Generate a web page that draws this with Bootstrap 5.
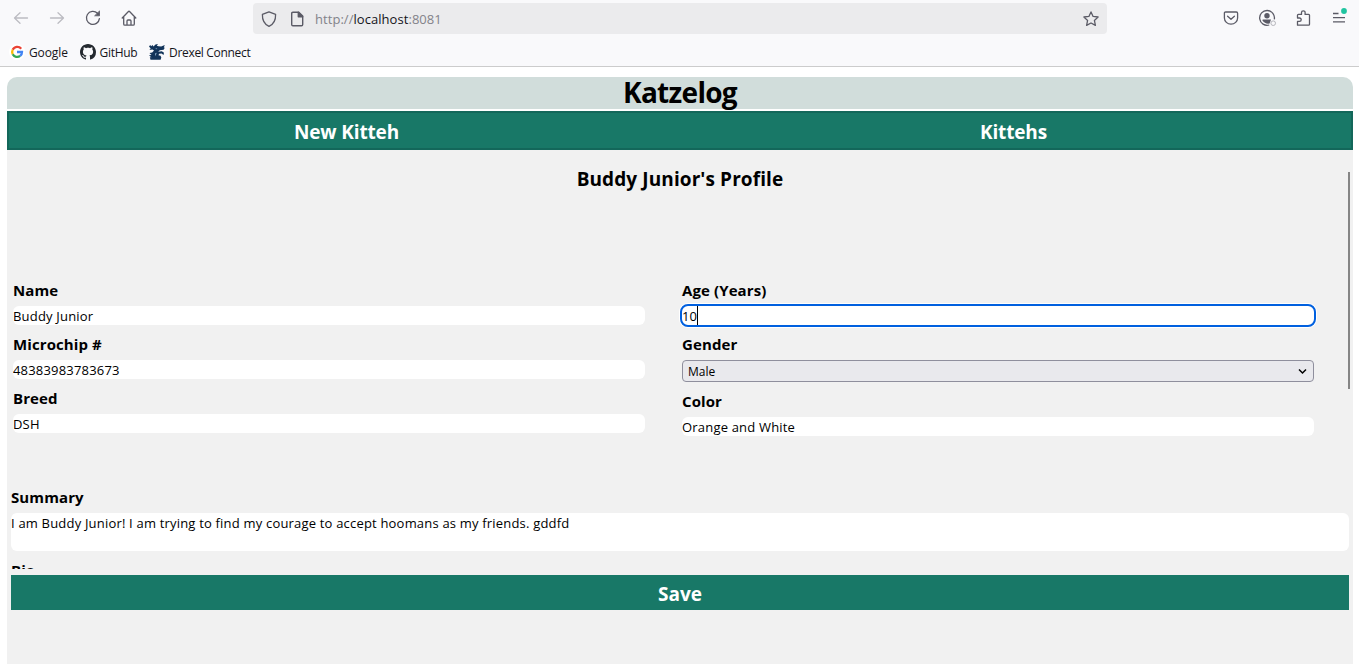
<!DOCTYPE html>
<html lang="en">
<head>
<meta charset="utf-8">
<meta name="viewport" content="width=device-width, initial-scale=1">
<title>Katzelog</title>
<link href="https://cdn.jsdelivr.net/npm/bootstrap@5.3.0/dist/css/bootstrap.min.css" rel="stylesheet">
<style>
  body { font-family: "Open Sans", "Noto Sans", sans-serif; color: #000; background: #fff; overflow: hidden; }
  svg { display: block; flex: none; overflow: visible; }
  .browser { height: 67px; background: #f9f9fb; border-bottom: 1px solid #ccc; color: #5b5b66; }
  .toolbar { height: 36px; }
  .tool-left { width: 253px; padding-left: 13px; gap: 20px; }
  .tool-right { padding-right: 11px; gap: 19px; }
  .urlbar { width: 854px; height: 31px; margin-top: 3px; background: #ebebed; border-radius: 4px; font-size: 13px; padding: 0 8px; color: #83838a; }
  .urlbar b { font-weight: 400; color: #15141a; }
  .page-icon { margin-left: 12px; }
  .url { margin-left: 10px; padding-top: 2px; letter-spacing: .05px; }
  .bookmarks { height: 30px; padding: 2px 0 0 9px; font-size: 12px; color: #15141a; }
  .bm { margin-left: 4px; padding-top: 1px; letter-spacing: -.1px; }
  .bm-google { width: 51px; }
  .bm-github { width: 49px; margin-left: 3.5px; letter-spacing: -.3px; }
  .bm-drexel { margin-left: 4.5px; letter-spacing: -.31px; }
  .app { margin: 10px 6px 0 7px; }
  .brand { height: 32px; background: #d1dddb; border-radius: 10px 10px 0 0; font-size: 28px; font-weight: 700; line-height: 30px; margin-bottom: 2px; letter-spacing: -.7px; }
  .tabs { height: 39px; background: #187867; border: 2px solid #13675a; padding: 3px 4px 0; font-size: 19px; font-weight: 700; letter-spacing: -.15px; }
  .panel { height: 514px; background: #f1f1f1; padding: 0 4px; }
  .profile { height: 419px; overflow: hidden; }
  .profile h1 { font-size: 19px; font-weight: 700; line-height: 26px; margin: 0; padding-top: 16px; height: 129px; letter-spacing: .1px; }
  .fields { padding-left: 2px; gap: 37px; }
  .field-col { width: 632px; }
  .form-label { display: block; font-size: 15px; font-weight: 700; line-height: 22px; height: 22px; margin: 0 0 5px; letter-spacing: .1px; }
  .form-control, .form-control:focus { font-size: 13px; line-height: 18px; min-height: 0; height: 19px; padding: 1px 0 0; border: 0; border-radius: 6px; color: #000; background: #fff; box-shadow: none; letter-spacing: .19px; }
  .entry { margin-bottom: 8px; }
  .form-control.editing { outline: 2px solid #0060df; box-shadow: 0 0 0 3px #fff; letter-spacing: 0; }
  .caret { left: 15px; top: 0; width: 1px; height: 19px; background: #000; }
  .form-select { height: 22px; padding: 0 5px; font-size: 12px; line-height: 19px; color: #000; background-color: #e9e9ed; background-image: none; border: 1px solid #8f8f9d; border-radius: 4px; }
  .chevron { right: 7px; top: 8px; }
  textarea.form-control { height: 38px; min-height: 0; resize: none; overflow: hidden; line-height: 19px; }
  .summary { margin-top: 42px; }
  .bio-label { margin-top: 8px; }
  .save { display: block; width: 100%; height: 35px; margin-top: 6px; padding: 0; border: 0; border-radius: 0; background: #187867; color: #fff; font-size: 19px; font-weight: 700; line-height: 39px; }
  .thumb { right: 3px; top: 22px; width: 2px; height: 217px; background: #858585; }
</style>
</head>
<body>
<header class="browser">
  <div class="toolbar d-flex align-items-start">
    <div class="tool-left d-flex align-items-center h-100">
      <svg width="16" height="16" viewBox="0 0 16 16" fill="none" stroke="#bcbcc2" stroke-width="1.3" stroke-linecap="round" stroke-linejoin="round"><path d="M14.5 8h-13M7 2.7 1.5 8 7 13.3"/></svg>
      <svg width="16" height="16" viewBox="0 0 16 16" fill="none" stroke="#bcbcc2" stroke-width="1.3" stroke-linecap="round" stroke-linejoin="round"><path d="M1.5 8h13M9 2.7 14.5 8 9 13.3"/></svg>
      <svg width="16" height="16" viewBox="0 0 16 16" fill="none" stroke="#5b5b66" stroke-width="1.3" stroke-linecap="round" stroke-linejoin="round"><path d="M14.4 8.6A6.5 6.5 0 1 1 12.5 3.3"/><path d="M14.5 1.3V5.8H10z" fill="#5b5b66" stroke-width=".8"/></svg>
      <svg width="16" height="16" viewBox="0 0 16 16" fill="none" stroke="#5b5b66" stroke-width="1.3" stroke-linecap="round" stroke-linejoin="round"><path d="M1.2 8 7.2 1.7q.8-.8 1.6 0L14.8 8M2.7 7v7q0 1.2 1.2 1.2h8.2q1.2 0 1.2-1.2V7M6 15v-4q0-1 1-1h2q1 0 1 1v4"/></svg>
    </div>
    <div class="urlbar d-flex align-items-center">
      <svg width="16" height="16" viewBox="0 0 16 16" fill="none" stroke="#5b5b66" stroke-width="1.3" stroke-linejoin="round"><path d="M8 .8 14.6 3.4C14.8 9 12.5 13.2 8 15.3 3.5 13.2 1.2 9 1.4 3.4z"/></svg>
      <svg class="page-icon" width="16" height="16" viewBox="0 0 16 16" fill="none" stroke="#5b5b66" stroke-width="1.4" stroke-linejoin="round"><path d="M3.9 1.2h5.9l3.9 3.9v8.4q0 1.2-1.2 1.2H3.9q-1.2 0-1.2-1.2V2.4q0-1.2 1.2-1.2z"/><path d="M9.3 1.2v4.5h4.4z" fill="#5b5b66"/></svg>
      <span class="url">http://<b>localhost</b>:8081</span>
      <svg class="ms-auto" width="16" height="16" viewBox="0 0 16 16" fill="none" stroke="#5b5b66" stroke-width="1.3" stroke-linejoin="round"><path d="m8 .9 2.1 4.5 5 .6-3.7 3.4 1 5L8 12l-4.4 2.4 1-5L.9 6l5-.6z"/></svg>
    </div>
    <div class="tool-right ms-auto d-flex align-items-center h-100">
      <svg width="16" height="16" viewBox="0 0 16 16" fill="none" stroke="#5b5b66" stroke-width="1.3" stroke-linecap="round" stroke-linejoin="round"><path d="M2.7 2h10.6q1.3 0 1.3 1.3V8a6.6 6.2 0 0 1-13.2 0V3.300Q1.400 2 2.700 2zM4.600 6.200 8 9.300l3.400-3.100"/></svg>
      <svg width="18" height="18" viewBox="0 0 18 18" fill="none"><path d="M11.200 16A7.400 7.400 0 1 1 16.300 10.400" stroke="#5b5b66" stroke-width="1.3"/><circle cx="9" cy="6.700" r="2.700" fill="#5b5b66"/><path d="M4.300 11.300q0-.9.900-.9h7.800l-1.400 4.200Q7.200 15.500 4.300 11.300z" fill="#5b5b66"/><circle cx="15.200" cy="14.200" r="2.300" stroke="#b5b5bb"/></svg>
      <svg width="16" height="16" viewBox="0 0 16 16" fill="none" stroke="#5b5b66" stroke-width="1.3" stroke-linejoin="round"><path d="M2.500 15.200V11.400h2a1.700 1.700 0 0 0 0-3.400h-2V5.300q0-.9.900-.9h3.100V2.600a1.800 1.800 0 0 1 3.600 0v1.800h3.500q.9 0 .9.900v9q0 .9-.9.900z"/></svg>
      <svg width="18" height="18" viewBox="0 0 18 18" fill="none"><path d="M3 4.500h5.500M3 8.700h12M3 12.900h12" stroke="#5b5b66" stroke-width="1.3"/><circle cx="14" cy="2" r="2.900" fill="#20c4a0"/></svg>
    </div>
  </div>
  <nav class="bookmarks d-flex align-items-center">
    <svg width="16" height="16" viewBox="0 0 16 16" fill="none" stroke-width="2.300"><circle cx="8" cy="8" r="8" fill="#fff"/><path d="M12.200 4.700A5 5 0 0 0 3.700 5.800" stroke="#ea4335"/><path d="M3.700 5.700a5 5 0 0 0 0 4.600" stroke="#fbbc05"/><path d="M3.700 10.200a5 5 0 0 0 7.500 1.600" stroke="#34a853"/><path d="M8 8h5a5 5 0 0 1-1.800 3.900" stroke="#4285f4"/></svg>
    <span class="bm bm-google">Google</span>
    <svg width="16" height="16" viewBox="0 0 16 16" fill="#24292f"><path d="M8 0C3.580 0 0 3.580 0 8c0 3.540 2.290 6.530 5.470 7.590.4.070.55-.17.55-.38 0-.19-.01-.82-.01-1.490-2.010.37-2.530-.49-2.690-.94-.09-.23-.48-.94-.82-1.130-.28-.15-.68-.52-.01-.53.63-.01 1.080.58 1.230.82.72 1.210 1.870.87 2.330.66.070-.52.28-.87.51-1.070-1.780-.2-3.640-.89-3.640-3.950 0-.87.31-1.590.82-2.150-.08-.2-.36-1.020.08-2.120 0 0 .67-.21 2.200.82.64-.18 1.320-.27 2-.27s1.360.09 2 .27c1.530-1.040 2.200-.82 2.200-.82.44 1.100.16 1.920.08 2.120.51.56.82 1.270.82 2.150 0 3.070-1.870 3.750-3.650 3.950.29.25.54.73.54 1.480 0 1.070-.01 1.930-.01 2.200 0 .21.150.46.55.38A8 8 0 0 0 16 8c0-4.420-3.580-8-8-8z"/></svg>
    <span class="bm bm-github">GitHub</span>
    <svg width="16" height="16" viewBox="0 0 16 16" fill="#12345a"><path d="M0 2.500 1.200 1l1 1.300L3.500 1l1 1.500L6.500.5 9 0 7.800 1.700 9.500 2.200l2.700.2L15.800 1l-1 2.600 1 .2-1.200 2-3.800.5-1.600 1.400 3.600-.4 2.200 1.500-.5 2.200-1.900-1.500-2.500.3-.6 1.400 2 .6.800 1.700-.7 2.300H1.500L.8 13l1.700.4L0 11.200l2.500-.1L.5 9l2.700-.6L5 6.500l-1.600-.9L.4 6l1.300-1.500z"/><path d="m6.400 3.900 2 .8-1.200.5zM6 9.500l1.700-.7-1.300 3.400z" fill="#8fb0cb"/></svg>
    <span class="bm bm-drexel">Drexel Connect</span>
  </nav>
</header>

<main class="app">
  <div class="brand text-center">Katzelog</div>
  <nav class="tabs d-flex text-white text-center align-items-center">
    <a class="w-50 text-reset text-decoration-none">New Kitteh</a>
    <a class="w-50 text-reset text-decoration-none">Kittehs</a>
  </nav>
  <section class="panel position-relative">
    <div class="profile">
      <h1 class="text-center">Buddy Junior's Profile</h1>
      <div class="fields d-flex">
        <div class="field-col">
          <div class="entry"><label class="form-label" for="name">Name</label><input class="form-control" id="name" value="Buddy Junior"></div>
          <div class="entry"><label class="form-label" for="chip">Microchip #</label><input class="form-control" id="chip" value="48383983783673"></div>
          <div class="entry"><label class="form-label" for="breed">Breed</label><input class="form-control" id="breed" value="DSH"></div>
        </div>
        <div class="field-col">
          <div class="entry"><label class="form-label" for="age">Age (Years)</label><div class="position-relative"><input class="form-control editing" id="age" value="10"><span class="caret position-absolute"></span></div></div>
          <div class="entry"><label class="form-label" for="gender">Gender</label><div class="position-relative"><select class="form-select" id="gender"><option>Male</option><option>Female</option></select><svg class="chevron position-absolute" width="9" height="8" viewBox="0 0 9 8" fill="none" stroke="#000" stroke-width="1.5"><path d="m1 1.500 3.500 3.500L8 1.500"/></svg></div></div>
          <div class="entry"><label class="form-label" for="color">Color</label><input class="form-control" id="color" value="Orange and White"></div>
        </div>
      </div>
      <div class="summary">
        <label class="form-label" for="summary">Summary</label>
        <textarea class="form-control" id="summary">I am Buddy Junior! I am trying to find my courage to accept hoomans as my friends. gddfd</textarea>
        <label class="form-label bio-label" for="bio">Bio</label>
      </div>
    </div>
    <button class="btn save" type="button">Save</button>
    <div class="thumb position-absolute"></div>
  </section>
</main>
<script src="https://cdn.jsdelivr.net/npm/bootstrap@5.3.0/dist/js/bootstrap.bundle.min.js"></script>
</body>
</html>
